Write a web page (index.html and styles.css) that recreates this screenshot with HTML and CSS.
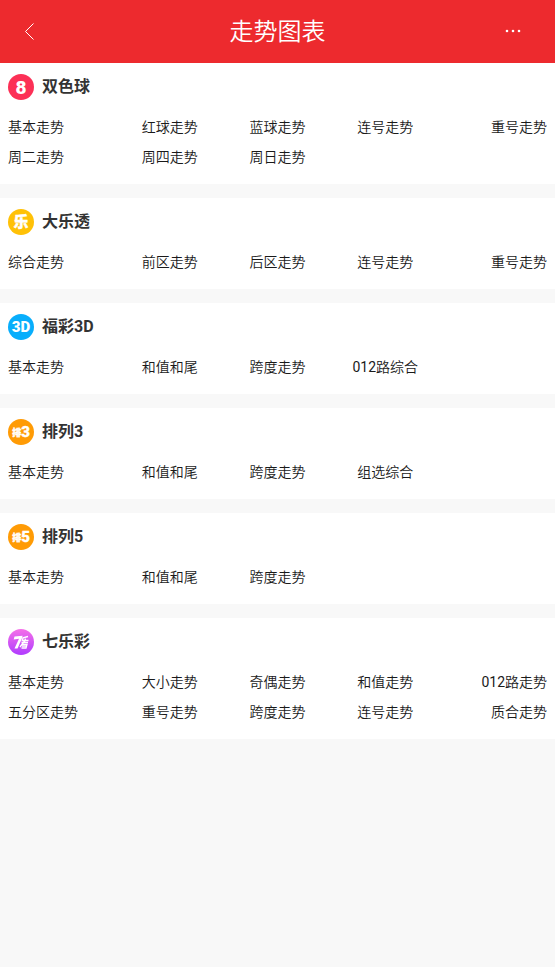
FILE: index.html
```html
<!DOCTYPE html>
<html lang="zh-CN">
<head>
	<meta charset="UTF-8">
	<meta name="viewport" content="width=device-width, initial-scale=1">
	<title>走势图表</title>
	<link rel="stylesheet" href="styles.css">
</head>
<body>
	<header class="header">
		<button class="header-btn" type="button" aria-label="返回">
			<svg width="18" height="18" viewBox="0 0 18 18"><path d="M13.500 .5L5.500 8.500L13.500 16.500" fill="none" stroke="#fff" stroke-width="1"/></svg>
		</button>
		<h1>走势图表</h1>
		<button class="header-btn" type="button" aria-label="更多">
			<svg width="18" height="18" viewBox="0 0 18 18"><g fill="#fff"><circle cx="3" cy="8" r="1.300"/><circle cx="9" cy="8" r="1.300"/><circle cx="15" cy="8" r="1.300"/></g></svg>
		</button>
	</header>

	<section class="lottery">
		<h2>
			<svg class="logo" viewBox="0 0 26 26" aria-hidden="true">
				<circle cx="13" cy="13" r="13" fill="#fc3056"/>
				<text class="mark" x="13" y="20" font-size="19">8</text>
			</svg>
			双色球
		</h2>
		<ul>
			<li><a href="#">基本走势</a></li>
			<li><a href="#">红球走势</a></li>
			<li><a href="#">蓝球走势</a></li>
			<li><a href="#">连号走势</a></li>
			<li><a href="#">重号走势</a></li>
			<li><a href="#">周二走势</a></li>
			<li><a href="#">周四走势</a></li>
			<li><a href="#">周日走势</a></li>
		</ul>
	</section>

	<section class="lottery">
		<h2>
			<svg class="logo" viewBox="0 0 26 26" aria-hidden="true">
				<circle cx="13" cy="13" r="13" fill="#ffc107"/>
				<text class="mark thick" x="13" y="18" font-size="15">乐</text>
			</svg>
			大乐透
		</h2>
		<ul>
			<li><a href="#">综合走势</a></li>
			<li><a href="#">前区走势</a></li>
			<li><a href="#">后区走势</a></li>
			<li><a href="#">连号走势</a></li>
			<li><a href="#">重号走势</a></li>
		</ul>
	</section>

	<section class="lottery">
		<h2>
			<svg class="logo" viewBox="0 0 26 26" aria-hidden="true">
				<circle cx="13" cy="13" r="13" fill="#08aefc"/>
				<text class="mark" x="13" y="18" font-size="15">3D</text>
			</svg>
			福彩3D
		</h2>
		<ul>
			<li><a href="#">基本走势</a></li>
			<li><a href="#">和值和尾</a></li>
			<li><a href="#">跨度走势</a></li>
			<li><a href="#">012路综合</a></li>
		</ul>
	</section>

	<section class="lottery">
		<h2>
			<svg class="logo" viewBox="0 0 26 26" aria-hidden="true">
				<circle cx="13" cy="13" r="13" fill="#ff9b05"/>
				<text class="mark thick" x="13" y="18" font-size="15"><tspan font-size="9" dy="-1">排</tspan><tspan dy="1">3</tspan></text>
			</svg>
			排列3
		</h2>
		<ul>
			<li><a href="#">基本走势</a></li>
			<li><a href="#">和值和尾</a></li>
			<li><a href="#">跨度走势</a></li>
			<li><a href="#">组选综合</a></li>
		</ul>
	</section>

	<section class="lottery">
		<h2>
			<svg class="logo" viewBox="0 0 26 26" aria-hidden="true">
				<circle cx="13" cy="13" r="13" fill="#ff9b05"/>
				<text class="mark thick" x="13" y="18" font-size="15"><tspan font-size="9" dy="-1">排</tspan><tspan dy="1">5</tspan></text>
			</svg>
			排列5
		</h2>
		<ul>
			<li><a href="#">基本走势</a></li>
			<li><a href="#">和值和尾</a></li>
			<li><a href="#">跨度走势</a></li>
		</ul>
	</section>

	<section class="lottery">
		<h2>
			<svg class="logo" viewBox="0 0 26 26" aria-hidden="true">
				<defs>
					<linearGradient id="purple" x1="0" y1="0" x2="0" y2="1">
						<stop offset="0" stop-color="#f570e8"/>
						<stop offset="1" stop-color="#b03cff"/>
					</linearGradient>
				</defs>
				<circle cx="13" cy="13" r="13" fill="url(#purple)"/>
				<path fill="#fff" d="M6.500 7.600L14.600 6.800L14 9.200L9.500 19.500H6.500L11 9.800L5.700 10.400Z"/>
				<g fill="none" stroke="#fff" stroke-width="1.300">
					<path d="M20 7.500L15 8.800L14.300 11.500H20.500M17.500 9.500L16.500 13"/>
					<path d="M13.500 13.500H20M16.500 12L12 18M14 15.500H19L18 19H13.500M14 17.200H18"/>
				</g>
			</svg>
			七乐彩
		</h2>
		<ul>
			<li><a href="#">基本走势</a></li>
			<li><a href="#">大小走势</a></li>
			<li><a href="#">奇偶走势</a></li>
			<li><a href="#">和值走势</a></li>
			<li><a href="#">012路走势</a></li>
			<li><a href="#">五分区走势</a></li>
			<li><a href="#">重号走势</a></li>
			<li><a href="#">跨度走势</a></li>
			<li><a href="#">连号走势</a></li>
			<li><a href="#">质合走势</a></li>
		</ul>
	</section>
</body>
</html>
```
FILE: styles.css
```css
*{
	margin: 0;
	padding: 0;
	box-sizing: border-box;
	list-style: none;
}
body{
	background-color: #f8f8f8;
	color: #1a1a1a;
	font: 14px/30px Roboto, "Noto Sans CJK SC DemiLight", "Noto Sans CJK SC", sans-serif;
}
a{
	color: inherit;
	text-decoration: none;
}
.header{
	display: flex;
	justify-content: space-between;
	align-items: center;
	height: 63px;
	padding: 0 20px;
	background-color: #ed2a2e;
	color: #fff;
}
.header h1{
	font-size: 24px;
	font-weight: 350;
}
.header-btn{
	display: flex;
	justify-content: center;
	width: 44px;
	border: 0;
	background: none;
	cursor: pointer;
}
.header-btn:first-child{
	justify-content: flex-start;
}
.lottery{
	margin-bottom: 14px;
	padding: 0 8px 12px;
	background-color: #fff;
}
.lottery h2{
	display: flex;
	align-items: center;
	gap: 8px;
	height: 48px;
	margin-bottom: 1px;
	color: #333;
	font-family: Roboto, "Noto Sans CJK SC", sans-serif;
	font-size: 16px;
	font-weight: 700;
}
.logo{
	width: 26px;
	height: 26px;
}
.mark{
	fill: #fff;
	font-family: Roboto, "Noto Sans CJK SC", sans-serif;
	font-weight: 900;
	text-anchor: middle;
}
.thick{
	stroke: #fff;
	stroke-width: .4px;
}
.lottery ul{
	display: grid;
	grid-template-columns: repeat(5, 1fr);
}
.lottery li{
	text-align: center;
	white-space: nowrap;
}
.lottery li:nth-child(5n+1){
	text-align: left;
}
.lottery li:nth-child(5n){
	text-align: right;
}
```
